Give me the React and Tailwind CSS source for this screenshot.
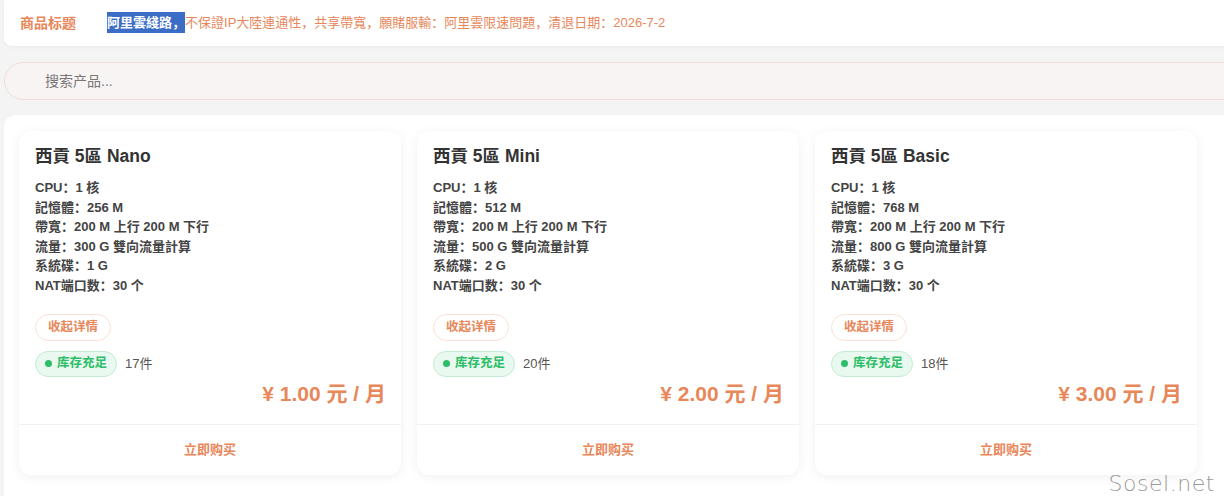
const products = [
  { name: "西貢 5區 Nano", mem: "256 M", flow: "300 G", disk: "1 G", stock: 17, price: "1.00" },
  { name: "西貢 5區 Mini", mem: "512 M", flow: "500 G", disk: "2 G", stock: 20, price: "2.00" },
  { name: "西貢 5區 Basic", mem: "768 M", flow: "800 G", disk: "3 G", stock: 18, price: "3.00" },
];

const ProductCard = ({ p }) => (
  <div className="flex flex-col bg-white rounded-xl shadow-[0_2px_12px_rgba(0,0,0,0.06)] h-[344px]">
    <div className="flex-1 pl-4 pr-[15px] pt-[13px]">
      <h3 className="text-[17.5px] leading-6 font-bold text-[#333]">{p.name}</h3>
      <div className="mt-[10px] text-[13px] leading-[19.6px] font-semibold text-[#444]">
        <p>CPU：1 核</p>
        <p>記憶體：{p.mem}</p>
        <p>帶寬：200 M 上行 200 M 下行</p>
        <p>流量：{p.flow} 雙向流量計算</p>
        <p>系統碟：{p.disk}</p>
        <p>NAT端口数：30 个</p>
      </div>
      <button className="mt-[18px] h-[27px] px-3 rounded-full border border-[#fbe0d4] text-[12.5px] font-semibold text-[#e8875a] bg-white">
        收起详情
      </button>
      <div className="mt-[10px] flex items-center gap-2">
        <span className="flex items-center gap-[5px] h-[26px] px-[9px] rounded-full bg-[#e9f9ef] border border-[#c3ecd3] text-[12.5px] font-bold text-[#2dbd68]">
          <span className="w-[7px] h-[7px] rounded-full bg-[#2dbd68]" />
          库存充足
        </span>
        <span className="text-[13px] text-[#555]">{p.stock}件</span>
      </div>
      <div className="mt-[3px] text-right text-[21px] leading-7 font-bold text-[#e8875a]">
        ¥ {p.price} 元 / 月
      </div>
    </div>
    <div className="h-[51px] border-t border-[#f5f0ee] flex items-center justify-center text-[13px] font-bold text-[#e8875a]">
      立即购买
    </div>
  </div>
);

export default function App() {
  return (
    <div
      className="relative w-[1224px] h-[496px] overflow-hidden bg-[#f4f4f4]"
      style={{ fontFamily: '"Liberation Sans", "Noto Sans CJK SC", sans-serif' }}
    >
      <div className="ml-1 w-[1240px]">
        <div className="h-[46px] bg-white rounded-bl-lg flex items-center shadow-[0_1px_4px_rgba(0,0,0,0.04)]">
          <span className="pl-4 w-[103px] text-[14px] font-semibold text-[#e8875a]">商品标题</span>
          <span className="text-[13px] text-[#e8875a]">
            <span className="bg-[#3b6cc6] text-white font-semibold py-[3px]">阿里雲綫路，</span>
            不保證IP大陸連通性，共享帶寬，願賭服輸：阿里雲限速問題，清退日期：2026-7-2
          </span>
        </div>
        <div className="mt-4 h-[38px] rounded-full bg-[#f9f4f4] border border-[#f3dcdc] flex items-center pl-10 text-[14px] text-[#777]">
          搜索产品...
        </div>
        <div className="mt-[15px] bg-white rounded-tl-xl px-[15px] pt-4 h-[400px]">
          <div className="grid grid-cols-[382px_382px_382px] gap-x-[16px]">
            {products.map((p) => (
              <ProductCard key={p.name} p={p} />
            ))}
          </div>
        </div>
      </div>
      <div className="absolute right-[9px] bottom-[-4px] text-[22px] text-[#9a9a9a] tracking-wide" style={{ fontFamily: '"DejaVu Sans", sans-serif', fontWeight: 300 }}>
        Sosel.net
      </div>
    </div>
  );
}
